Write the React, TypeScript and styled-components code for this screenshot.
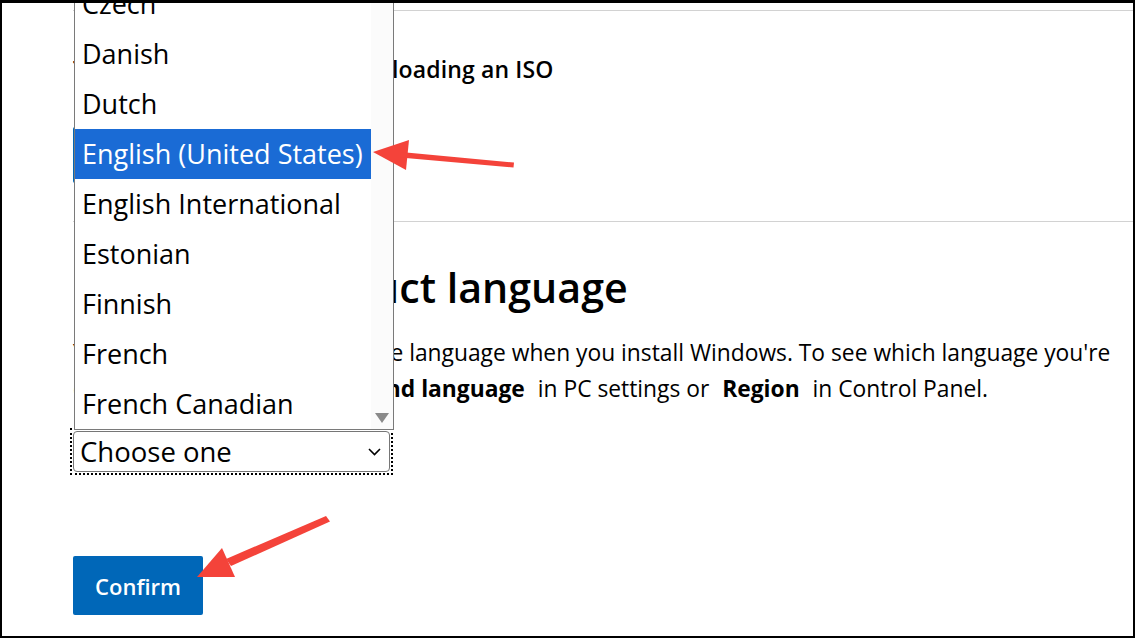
import React from "react";
import styled, { createGlobalStyle } from "styled-components";

const GlobalStyle = createGlobalStyle`
  html, body { margin: 0; padding: 0; background: #fff; }
  body {
    font-family: "Open Sans", "Noto Sans", sans-serif;
    color: #000;
    -webkit-font-smoothing: antialiased;
  }
  * { box-sizing: border-box; }
`;

const Frame = styled.div`
  position: relative;
  width: 1135px;
  height: 638px;
  border-style: solid;
  border-color: #000;
  border-width: 3px 2px 2px 2px;
  background: #fff;
  overflow: hidden;
`;

const Content = styled.main`
  display: flex;
  flex-direction: column;
  align-items: flex-start;
  padding: 7px 0 0 71px;
`;

const Divider = styled.hr<{ $gap: number }>`
  align-self: stretch;
  margin: ${(p) => p.$gap}px 0 0 0;
  border: 0;
  height: 1px;
  background: #d2d2d2;
`;

const SubHeading = styled.h3`
  margin: 43px 0 0 0;
  font-size: 23px;
  line-height: 30px;
  font-weight: 600;
  letter-spacing: 0.15px;
  white-space: nowrap;
`;

const PrimaryButton = styled.button<{ $top: number; $height: number; $width: number }>`
  margin-top: ${(p) => p.$top}px;
  height: ${(p) => p.$height}px;
  width: ${(p) => p.$width}px;
  border: 0;
  border-radius: 2px;
  background: #0067b8;
  color: #fff;
  font-family: inherit;
  font-size: 22px;
  font-weight: 600;
  padding: 0;
  cursor: pointer;
`;

const Heading = styled.h2`
  margin: 39px 0 0 0;
  font-size: 41.2px;
  line-height: 52px;
  font-weight: 600;
  white-space: nowrap;
`;

const Paragraph = styled.p`
  margin: 22px 0 0 0;
  font-size: 22.8px;
  line-height: 36px;
  white-space: nowrap;
  b { font-weight: 700; margin: 0 7px; }
`;

const SelectWrap = styled.div`
  position: relative;
  margin-top: 24px;
`;

const SelectBox = styled.div`
  position: relative;
  display: flex;
  align-items: center;
  justify-content: space-between;
  width: 317px;
  height: 41px;
  padding: 0 8px 0 6px;
  border: 1px solid #767676;
  border-radius: 4px;
  font-size: 27.5px;
  background: #fff;

  &::after {
    content: "";
    position: absolute;
    inset: -4px;
    border: 2px dotted #000;
    pointer-events: none;
  }
`;

const Chevron = styled.svg`
  width: 13px;
  height: 8px;
  flex: none;
`;

const Listbox = styled.div`
  position: absolute;
  left: 1px;
  bottom: calc(100% + 1px);
  width: 320px;
  display: flex;
  border: 1px solid #7a7a7a;
  border-top: 0;
  background: #fff;
`;

const Options = styled.ul`
  flex: 1;
  margin: 0;
  padding: 0;
  list-style: none;
`;

const Option = styled.li<{ $selected?: boolean }>`
  height: 50px;
  line-height: 50px;
  padding-left: 7px;
  font-size: 27px;
  white-space: nowrap;
  background: ${(p) => (p.$selected ? "#1a6bd5" : "transparent")};
  color: ${(p) => (p.$selected ? "#fff" : "#000")};
`;

const Scrollbar = styled.div`
  position: relative;
  width: 22px;
  flex: none;
  background: #fbfbfb;
`;

const Thumb = styled.div`
  position: absolute;
  top: 0;
  left: 6px;
  width: 10px;
  height: 23px;
  border-radius: 5px;
  background: #8a8a8a;
`;

const DownArrow = styled.div`
  position: absolute;
  bottom: 6px;
  left: 4px;
  width: 0;
  height: 0;
  border-left: 7px solid transparent;
  border-right: 7px solid transparent;
  border-top: 10px solid #8a8a8a;
`;

const Annotations = styled.svg`
  position: absolute;
  top: -3px;
  left: -2px;
  width: 1135px;
  height: 638px;
  pointer-events: none;
`;

const languages = [
  "Czech",
  "Danish",
  "Dutch",
  "English (United States)",
  "English International",
  "Estonian",
  "Finnish",
  "French",
  "French Canadian",
];

export default function App() {
  return (
    <>
      <GlobalStyle />
      <Frame>
        <Content>
          <Divider $gap={0} />
          <SubHeading>Things to know before downloading an ISO</SubHeading>
          <PrimaryButton $top={43} $height={56} $width={200}>Confirm</PrimaryButton>
          <Divider $gap={38} />
          <Heading>Select the product language</Heading>
          <Paragraph>
            You'll need to choose the same language when you install Windows. To see which language you're
            <br />
            currently using, go to <b>Time and language</b> in PC settings or <b>Region</b> in Control Panel.
          </Paragraph>
          <SelectWrap>
            <SelectBox>
              <span>Choose one</span>
              <Chevron viewBox="0 0 13 8">
                <polyline points="1,1 6.5,6.5 12,1" fill="none" stroke="#000" strokeWidth="1.6" />
              </Chevron>
            </SelectBox>
            <Listbox>
              <Options>
                {languages.map((l, i) => (
                  <Option key={l} $selected={i === 3}>
                    {l}
                  </Option>
                ))}
              </Options>
              <Scrollbar>
                <Thumb />
                <DownArrow />
              </Scrollbar>
            </Listbox>
          </SelectWrap>
          <PrimaryButton $top={84} $height={59} $width={130}>Confirm</PrimaryButton>
        </Content>
        <Annotations viewBox="0 0 1135 638">
          <g fill="#f4433a" stroke="none">
            <polygon points="373,152 409,140 406,170" />
            <polygon points="514,162.5 513.5,167.5 400,157.5 401,152" />
            <polygon points="197,577 222,548 235,577" />
            <polygon points="326,516 330,521.5 231,566 226,559" />
          </g>
        </Annotations>
      </Frame>
    </>
  );
}
